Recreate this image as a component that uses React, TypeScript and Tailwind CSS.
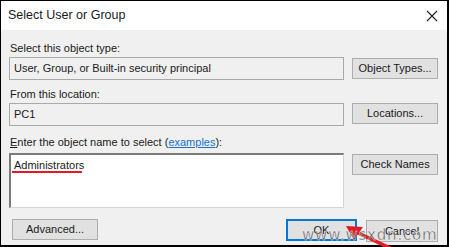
import React from "react";

const font = { fontFamily: '"Liberation Sans", Arial, sans-serif' };

const Btn = ({ label, className = "" }: { label: string; className?: string }) => (
  <div
    className={`flex items-center justify-center h-[21px] bg-[#e1e1e1] border border-[#adadad] text-[11px] text-[#1a1a1a] ${className}`}
  >
    {label}
  </div>
);

export default function App() {
  return (
    <div
      className="relative w-[449px] h-[247px] bg-black pt-px pl-px pr-[2px] pb-[2px] overflow-hidden"
      style={font}
    >
      <div className="flex flex-col w-full h-full bg-[#f0f0f0]">
        {/* Title bar */}
        <div className="flex items-center justify-between h-[29px] bg-white pl-[7px] pr-[9px]">
          <span className="text-[12.5px] text-[#1a1a1a]">Select User or Group</span>
          <svg width="12" height="12" viewBox="0 0 12 12">
            <path d="M1 1 L11 11 M11 1 L1 11" stroke="#222" strokeWidth="1.1" />
          </svg>
        </div>

        {/* Body */}
        <div className="flex flex-col pl-[8px] pr-[9px] pt-[10px] text-[11px] text-[#1a1a1a]">
          <div className="h-[16px] leading-[16px] pl-[1px]">Select this object type:</div>
          <div className="flex items-start gap-[8px] mt-[1px]">
            <div className="flex items-center w-[336px] h-[23px] border border-[#a9a9a9] bg-[#f0f0f0] pl-[4px]">
              User, Group, or Built-in security principal
            </div>
            <Btn label="Object Types..." className="w-[86px] mt-px" />
          </div>

          <div className="h-[16px] leading-[16px] pl-[1px] mt-[6px]">From this location:</div>
          <div className="flex items-start gap-[8px] mt-[1px]">
            <div className="flex items-center w-[336px] h-[23px] border border-[#a9a9a9] bg-[#f0f0f0] pl-[4px]">
              PC1
            </div>
            <Btn label="Locations..." className="w-[86px]" />
          </div>

          <div className="h-[16px] leading-[16px] pl-[1px] mt-[8px]">
            <span className="underline">E</span>nter the object name to select (
            <span className="text-[#1a6fd0] underline">examples</span>):
          </div>
          <div className="flex items-start gap-[8px] mt-[3px]">
            <div className="relative w-[336px] h-[55px] bg-white border-t-2 border-l-2 border-[#7a7a7a] border-r border-b border-r-[#d4d4d4] border-b-[#d4d4d4] pl-[3px] pt-[2px]">
              Administrators
              <div className="absolute left-[1px] top-[16px] w-[70px] h-[2px] bg-[#e01b24]" />
            </div>
            <Btn label="Check Names" className="w-[86px] mt-px" />
          </div>

          <div className="flex items-start mt-[11px]">
            <Btn label="Advanced..." className="w-[86px] ml-[3px]" />
            <div className="flex-1" />
            <div className="flex items-center justify-center w-[71px] h-[22px] bg-[#e1e1e1] border-2 border-[#0078d7] text-[11px]">
              OK
            </div>
            <Btn label="Cancel" className="w-[72px] ml-[9px] mt-px h-[22px]" />
          </div>
        </div>
      </div>

      {/* Red arrow */}
      <svg className="absolute left-[340px] top-[222px]" width="60" height="26" viewBox="0 0 60 26">
        <path d="M52 27 L14 9" stroke="#e01b24" strokeWidth="3.5" />
        <path d="M6 4 L23 5 L14 18 Z" fill="#e01b24" />
      </svg>

      {/* Watermark */}
      <div
        className="absolute left-[302px] top-[228px] text-[15px] leading-[15px] tracking-[0.8px] text-[rgba(70,70,70,0.85)]"
        style={{ fontFamily: '"DejaVu Sans", sans-serif', WebkitTextStroke: "0.3px #fff" }}
      >
        www.wsxdn.com
      </div>
    </div>
  );
}
